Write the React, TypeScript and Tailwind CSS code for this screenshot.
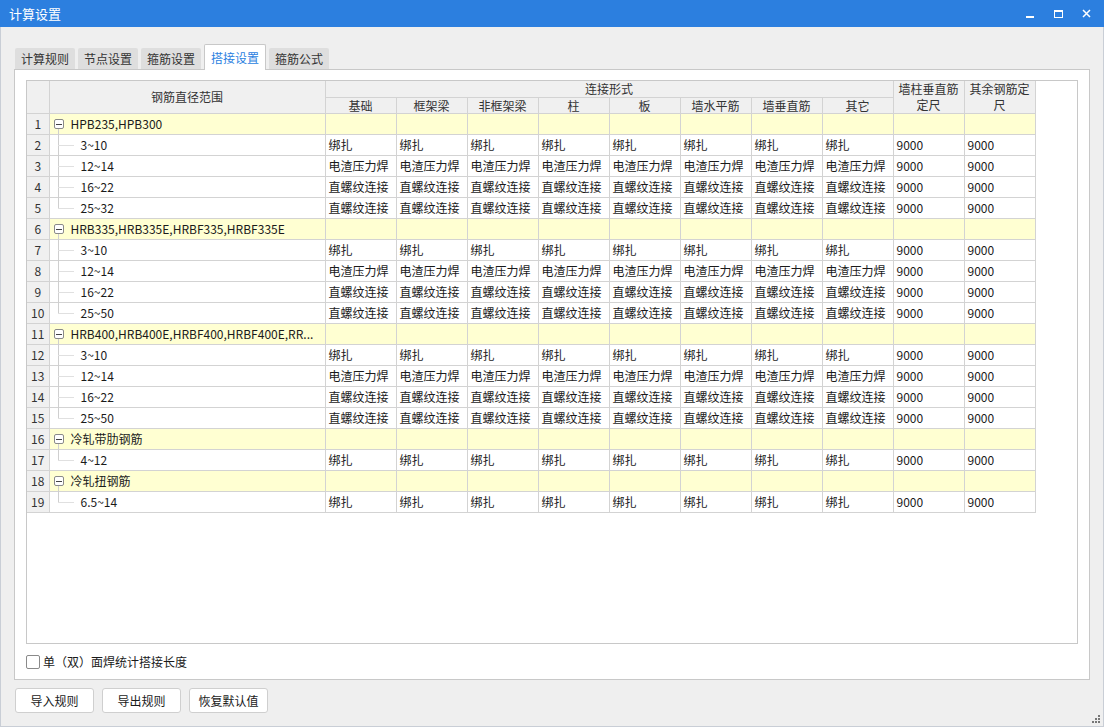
import React from "react";

const BIND = "绑扎";
const WELD = "电渣压力焊";
const SCREW = "直螺纹连接";

const groups: { name: string; rows: { range: string; v: string }[] }[] = [
  {
    name: "HPB235,HPB300",
    rows: [
      { range: "3~10", v: BIND },
      { range: "12~14", v: WELD },
      { range: "16~22", v: SCREW },
      { range: "25~32", v: SCREW },
    ],
  },
  {
    name: "HRB335,HRB335E,HRBF335,HRBF335E",
    rows: [
      { range: "3~10", v: BIND },
      { range: "12~14", v: WELD },
      { range: "16~22", v: SCREW },
      { range: "25~50", v: SCREW },
    ],
  },
  {
    name: "HRB400,HRB400E,HRBF400,HRBF400E,RR...",
    rows: [
      { range: "3~10", v: BIND },
      { range: "12~14", v: WELD },
      { range: "16~22", v: SCREW },
      { range: "25~50", v: SCREW },
    ],
  },
  { name: "冷轧带肋钢筋", rows: [{ range: "4~12", v: BIND }] },
  { name: "冷轧扭钢筋", rows: [{ range: "6.5~14", v: BIND }] },
];

const subHeads = ["基础", "框架梁", "非框架梁", "柱", "板", "墙水平筋", "墙垂直筋", "其它"];
const tabs = ["计算规则", "节点设置", "箍筋设置", "搭接设置", "箍筋公式"];

const font = { fontFamily: '"Noto Sans CJK SC", "Noto Sans", sans-serif' };

function TreeGlyph({ kind, last }: { kind: "group" | "child"; last?: boolean }) {
  if (kind === "group") {
    return (
      <span className="relative mr-[7px] inline-block h-[20px] w-[10px] shrink-0">
        <span className="absolute left-0 top-[5px] flex h-[10px] w-[10px] items-center justify-center rounded-[2px] border border-[#8a8a8a] bg-white">
          <span className="h-px w-[6px] bg-[#444]" />
        </span>
        <span className="absolute left-[4px] top-[15px] h-[6px] w-px bg-[#cfcfcf]" />
      </span>
    );
  }
  return (
    <span className="relative mr-[7px] inline-block h-[20px] w-[20px] shrink-0">
      <span className={`absolute left-[4px] top-[-1px] w-px bg-[#cfcfcf] ${last ? "h-[11px]" : "h-[22px]"}`} />
      <span className="absolute left-[4px] top-[10px] h-px w-[16px] bg-[#e0e0e0]" />
    </span>
  );
}

export default function App() {
  let n = 0;
  const rows: React.ReactNode[] = [];
  groups.forEach((g) => {
    n++;
    rows.push(
      <tr key={`g${n}`} className="h-[20px] bg-[#ffffd2]">
        <td className="border-b border-r border-[#d3d3d3] bg-[#f0f0f0] text-center text-[#333]">{n}</td>
        <td className="border-b border-r border-[#d3d3d3] pl-[4px]">
          <div className="flex items-center overflow-hidden whitespace-nowrap">
            <TreeGlyph kind="group" />
            <span>{g.name}</span>
          </div>
        </td>
        {Array.from({ length: 10 }).map((_, i) => (
          <td key={i} className="border-b border-r border-[#d3d3d3]" />
        ))}
      </tr>
    );
    g.rows.forEach((r, ri) => {
      n++;
      rows.push(
        <tr key={`r${n}`} className="h-[20px] bg-white">
          <td className="border-b border-r border-[#d3d3d3] bg-[#f0f0f0] text-center text-[#333]">{n}</td>
          <td className="border-b border-r border-[#d3d3d3] pl-[4px]">
            <div className="flex items-center whitespace-nowrap">
              <TreeGlyph kind="child" last={ri === g.rows.length - 1} />
              <span>{r.range}</span>
            </div>
          </td>
          {subHeads.map((_, i) => (
            <td key={i} className="overflow-hidden whitespace-nowrap border-b border-r border-[#d3d3d3] pl-[3px]">
              {r.v}
            </td>
          ))}
          <td className="border-b border-r border-[#d3d3d3] pl-[3px]">9000</td>
          <td className="border-b border-r border-[#d3d3d3] pl-[3px]">9000</td>
        </tr>
      );
    });
  });

  return (
    <div className="flex h-[727px] w-[1104px] flex-col overflow-hidden bg-[#efefef] text-[12px] text-[#1a1a1a]" style={font}>
      {/* title bar */}
      <div className="flex h-[27px] shrink-0 items-center justify-between bg-[#2c7fdf] pl-[9px] text-white">
        <span className="text-[13px]">计算设置</span>
        <div className="flex h-full items-center">
          <span className="flex w-[28px] justify-center">
            <span className="mt-[7px] h-[2px] w-[8px] bg-white" />
          </span>
          <span className="flex w-[28px] justify-center">
            <span className="h-[8px] w-[9px] border border-t-2 border-white" />
          </span>
          <span className="flex w-[32px] justify-center pr-[4px]">
            <svg width="9" height="9" viewBox="0 0 9 9">
              <path d="M1 1L8 8M8 1L1 8" stroke="white" strokeWidth="1.5" />
            </svg>
          </span>
        </div>
      </div>

      <div className="flex flex-1 flex-col border-x border-b border-[#c9ced6] px-[13px]">
        {/* tabs */}
        <div className="mt-[17px] flex h-[25px] items-end gap-[3px] pl-px">
          {tabs.map((t) => {
            const active = t === "搭接设置";
            return active ? (
              <div
                key={t}
                className="relative z-10 -mb-px flex h-[26px] items-center rounded-t-[2px] border border-b-0 border-[#c8c8c8] bg-white px-[6px] text-[#2b7fdf]"
              >
                {t}
              </div>
            ) : (
              <div key={t} className="flex h-[21px] items-center rounded-t-[2px] bg-[#dedede] px-[6px] text-[#333]">
                {t}
              </div>
            );
          })}
        </div>

        {/* panel */}
        <div className="flex h-[611px] flex-col border border-[#c8c8c8] bg-white px-[11px] pt-[10px]">
          <div className="h-[564px] overflow-hidden border border-[#c8c8c8] bg-white">
            <table className="table-fixed border-collapse text-[12px]" style={{ width: 1008 }}>
              <colgroup>
                <col style={{ width: 22 }} />
                <col style={{ width: 276 }} />
                {Array.from({ length: 10 }).map((_, i) => (
                  <col key={i} style={{ width: 71 }} />
                ))}
              </colgroup>
              <thead className="bg-[#f0f0f0] font-normal text-[#333]">
                <tr className="h-[16px]">
                  <th rowSpan={2} className="border-b border-r border-[#d3d3d3] font-normal" />
                  <th rowSpan={2} className="border-b border-r border-[#d3d3d3] font-normal">
                    钢筋直径范围
                  </th>
                  <th colSpan={8} className="border-b border-r border-[#d3d3d3] font-normal leading-[15px]">
                    连接形式
                  </th>
                  <th rowSpan={2} className="border-b border-r border-[#d3d3d3] px-[2px] font-normal leading-[16px]">
                    墙柱垂直筋定尺
                  </th>
                  <th rowSpan={2} className="border-b border-r border-[#d3d3d3] px-[2px] font-normal leading-[16px]">
                    其余钢筋定尺
                  </th>
                </tr>
                <tr className="h-[16px]">
                  {subHeads.map((h) => (
                    <th key={h} className="border-b border-r border-[#d3d3d3] font-normal leading-[15px]">
                      {h}
                    </th>
                  ))}
                </tr>
              </thead>
              <tbody>{rows}</tbody>
            </table>
          </div>

          <label className="mt-[9px] flex items-center gap-[3px] text-[#1a1a1a]">
            <span className="h-[14px] w-[14px] rounded-[2px] border border-[#8a8a8a] bg-white" />
            <span>单（双）面焊统计搭接长度</span>
          </label>
        </div>

        {/* buttons */}
        <div className="mt-[8px] flex gap-[8px] pl-px">
          {["导入规则", "导出规则", "恢复默认值"].map((b) => (
            <button
              key={b}
              type="button"
              className="h-[25px] w-[79px] rounded-[3px] border border-[#cfcfcf] bg-white text-[12px] text-[#1a1a1a]"
            >
              {b}
            </button>
          ))}
        </div>
        <div className="relative flex-1">
          <svg className="absolute bottom-[2px] right-[-11px]" width="9" height="9" viewBox="0 0 9 9">
            <rect x="6" y="0" width="2" height="2" fill="#777" />
            <rect x="3" y="3" width="2" height="2" fill="#777" />
            <rect x="6" y="3" width="2" height="2" fill="#777" />
            <rect x="0" y="6" width="2" height="2" fill="#777" />
            <rect x="3" y="6" width="2" height="2" fill="#777" />
            <rect x="6" y="6" width="2" height="2" fill="#777" />
          </svg>
        </div>
      </div>
    </div>
  );
}
